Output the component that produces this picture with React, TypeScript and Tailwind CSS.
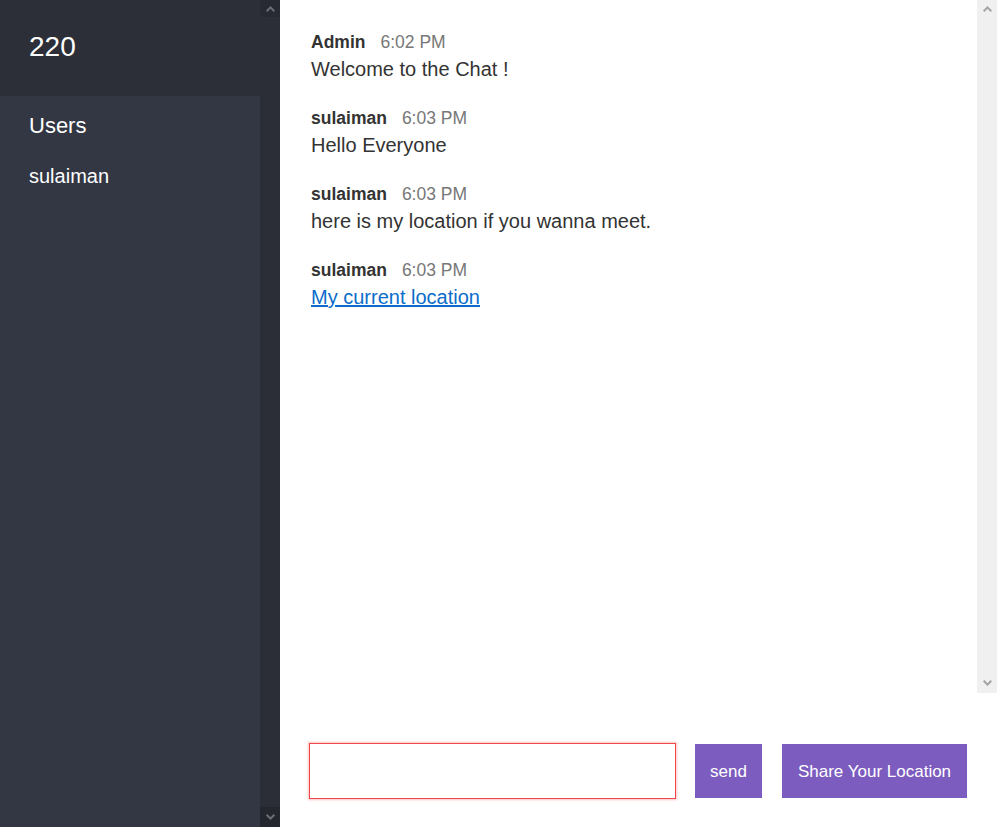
import React from "react";

type Msg = { from: string; at: string; text?: string; link?: string };

const messages: Msg[] = [
  { from: "Admin", at: "6:02 PM", text: "Welcome to the Chat !" },
  { from: "sulaiman", at: "6:03 PM", text: "Hello Everyone" },
  { from: "sulaiman", at: "6:03 PM", text: "here is my location if you wanna meet." },
  { from: "sulaiman", at: "6:03 PM", link: "My current location" },
];

function Chevron({ up, color }: { up?: boolean; color: string }) {
  return (
    <svg width="9" height="6" viewBox="0 0 9 6" className={up ? "" : "rotate-180"}>
      <path d="M0 4.5 L4.5 0 L9 4.5 L7.6 5.9 L4.5 2.8 L1.4 5.9 Z" fill={color} />
    </svg>
  );
}

function DarkScrollbar() {
  return (
    <div className="flex w-[20px] flex-col bg-[#2b2d37]">
      <div className="flex h-[17px] items-center justify-center bg-[#282a33]">
        <Chevron up color="#6c6e77" />
      </div>
      <div className="flex-1" />
      <div className="flex h-[20px] items-center justify-center bg-[#25272f]">
        <Chevron color="#6c6e77" />
      </div>
    </div>
  );
}

function LightScrollbar() {
  return (
    <div className="flex w-[20px] flex-col bg-[#f0f0f0]">
      <div className="flex h-[17px] items-center justify-center">
        <Chevron up color="#a3a3a3" />
      </div>
      <div className="flex-1" />
      <div className="flex h-[20px] items-center justify-center">
        <Chevron color="#a3a3a3" />
      </div>
    </div>
  );
}

export default function App() {
  return (
    <div className="flex h-[827px] w-[997px] overflow-hidden bg-white font-['Liberation_Sans',Arial,sans-serif]">
      <aside className="flex w-[280px] shrink-0">
        <div className="flex w-[260px] flex-col bg-[#333744] text-white">
          <div className="h-[96px] bg-[#2c2e38] px-[29px] pt-[31px] text-[28px] leading-[32px]">220</div>
          <div className="px-[29px] pt-[16px]">
            <h3 className="text-[22px] leading-[28px]">Users</h3>
            <ul className="mt-[22px]">
              <li className="text-[20px] leading-[28px]">sulaiman</li>
            </ul>
          </div>
        </div>
        <DarkScrollbar />
      </aside>

      <main className="flex flex-1 flex-col">
        <div className="flex h-[693px]">
          <div className="flex-1 px-[31px] pt-[32px] text-[#333]">
            {messages.map((m, i) => (
              <div key={i} className="mb-[27px]">
                <div className="flex h-[20px] items-center leading-[20px]">
                  <span className="mr-[15px] text-[17.5px] font-bold">{m.from}</span>
                  <span className="text-[17.5px] text-[#777]">{m.at}</span>
                </div>
                <p className="mt-[5px] text-[20px] leading-[24px]">
                  {m.link ? (
                    <a href="#" className="text-[#0b6dca] underline">
                      {m.link}
                    </a>
                  ) : (
                    m.text
                  )}
                </p>
              </div>
            ))}
          </div>
          <LightScrollbar />
        </div>

        <footer className="flex flex-1 items-start pl-[29px] pt-[50px]">
          <form className="flex h-[56px] items-center" onSubmit={(e) => e.preventDefault()}>
            <input
              required
              className="h-[56px] w-[367px] border border-[#f04848] px-2 text-[20px] shadow-[0_0_2px_1px_rgba(255,80,80,0.35)] outline-none"
            />
            <button className="ml-[19px] h-[54px] w-[67px] bg-[#7c5cbf] pt-[2px] text-[17px] text-white">send</button>
            <button type="button" className="ml-[20px] h-[54px] w-[185px] bg-[#7c5cbf] pt-[2px] text-[17px] text-white">
              Share Your Location
            </button>
          </form>
        </footer>
      </main>
    </div>
  );
}
